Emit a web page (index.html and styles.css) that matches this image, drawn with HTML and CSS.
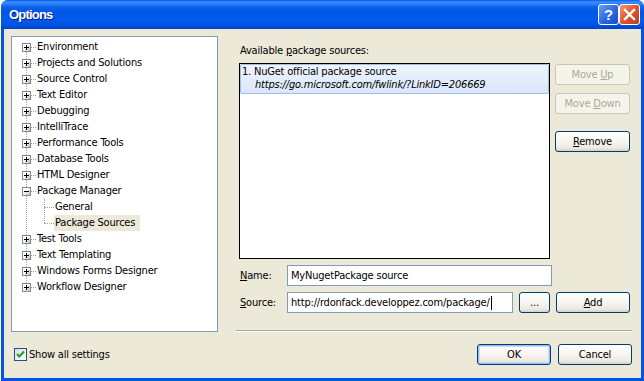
FILE: index.html
```html
<!DOCTYPE html>
<html lang="en">
<head>
  <meta charset="UTF-8">
  <title>Options</title>
  <link rel="stylesheet" href="styles.css">
</head>
<body>
<div class="window">
  <!-- title bar -->
  <div class="titlebar">
    <span class="title">Options</span>
    <div class="capButtons">
      <span class="capBtn help">?</span>
      <span class="capBtn close">
        <svg width="13" height="13" viewBox="0 0 13 13">
          <path d="M2 2 L11 11 M11 2 L2 11" stroke="#fff" stroke-width="2.4" stroke-linecap="square"/>
        </svg>
      </span>
    </div>
  </div>

  <div class="client">
    <div class="main">
      <!-- options tree -->
      <div class="tree">
        <ul class="nodes">
          <li class="node"><span class="exp plus"></span><span class="stub"></span><span class="label">Environment</span></li>
          <li class="node"><span class="exp plus"></span><span class="stub"></span><span class="label">Projects and Solutions</span></li>
          <li class="node"><span class="exp plus"></span><span class="stub"></span><span class="label">Source Control</span></li>
          <li class="node"><span class="exp plus"></span><span class="stub"></span><span class="label">Text Editor</span></li>
          <li class="node"><span class="exp plus"></span><span class="stub"></span><span class="label">Debugging</span></li>
          <li class="node"><span class="exp plus"></span><span class="stub"></span><span class="label">IntelliTrace</span></li>
          <li class="node"><span class="exp plus"></span><span class="stub"></span><span class="label">Performance Tools</span></li>
          <li class="node"><span class="exp plus"></span><span class="stub"></span><span class="label">Database Tools</span></li>
          <li class="node"><span class="exp plus"></span><span class="stub"></span><span class="label">HTML Designer</span></li>
          <li class="node"><span class="exp"></span><span class="stub"></span><span class="label">Package Manager</span></li>
          <li>
            <ul class="children">
              <li class="node child"><span class="stubLong"></span><span class="label">General</span></li>
              <li class="node child"><span class="stubLong"></span><span class="label selected">Package Sources</span></li>
            </ul>
          </li>
          <li class="node"><span class="exp plus"></span><span class="stub"></span><span class="label">Test Tools</span></li>
          <li class="node"><span class="exp plus"></span><span class="stub"></span><span class="label">Text Templating</span></li>
          <li class="node"><span class="exp plus"></span><span class="stub"></span><span class="label">Windows Forms Designer</span></li>
          <li class="node"><span class="exp plus"></span><span class="stub"></span><span class="label">Workflow Designer</span></li>
        </ul>
      </div>

      <!-- package sources page -->
      <div class="pane">
        <div class="caption">Available <u>p</u>ackage sources:</div>
        <div class="sources">
          <div class="listbox">
            <div class="item selectedItem">
              <div>1. NuGet official package source</div>
              <div class="url">https://go.microsoft.com/fwlink/?LinkID=206669</div>
            </div>
          </div>
          <div class="sideButtons">
            <span class="btn disabled"><span>Move <u>U</u>p</span></span>
            <span class="btn disabled down"><span>Move <u>D</u>own</span></span>
            <span class="btn remove"><span><u>R</u>emove</span></span>
          </div>
        </div>
        <div class="field nameRow">
          <span class="fieldLabel"><u>N</u>ame:</span>
          <span class="input nameInput">MyNugetPackage source</span>
        </div>
        <div class="field">
          <span class="fieldLabel"><u>S</u>ource:</span>
          <span class="input sourceInput">http://rdonfack.developpez.com/package/<span class="caret"></span></span>
          <span class="btn dots">...</span>
          <span class="btn add"><span><u>A</u>dd</span></span>
        </div>
        <div class="separator"></div>
      </div>
    </div>

    <div class="footer">
      <span class="checkbox">
        <svg width="11" height="11" viewBox="0 0 11 11">
          <path d="M2 5 L4.3 7.5 L9 2.5" fill="none" stroke="#21a121" stroke-width="2"/>
        </svg>
      </span>
      <span class="checkLabel">Show all settings</span>
      <span class="btn ok">OK</span>
      <span class="btn cancel">Cancel</span>
    </div>
  </div>
</div>
</body>
</html>
```

FILE: styles.css
```css
* {
  box-sizing: border-box;
  font-family: "DejaVu Sans", "Liberation Sans", sans-serif;
  font-stretch: condensed;
  font-size: 11px;
  letter-spacing: -0.2px;
  color: #000;
}
html, body {
  margin: 0;
  padding: 0;
  background: #fff;
}
.window {
  width: 643px;
  height: 381px;
  margin-left: 1px;
  padding: 0 3px 3px 3px;
  background: #0553e1;
  border-radius: 7px 7px 0 0;
  display: flex;
  flex-direction: column;
}
.titlebar {
  height: 29px;
  margin: 0 -3px;
  padding: 0 4px 0 8px;
  border-radius: 7px 7px 0 0;
  background: linear-gradient(to bottom, #0a5ae6 0, #3d8dfb 2px, #2b7ff5 4px, #0c62ea 7px, #0056e6 12px, #005aec 20px, #0052e2 25px, #0043cc 29px);
  display: flex;
  align-items: center;
}
.title {
  flex: 1;
  color: #fff;
  font-family: "Liberation Sans", sans-serif;
  font-stretch: normal;
  font-weight: bold;
  font-size: 13px;
  letter-spacing: -0.8px;
  text-shadow: 1px 1px 0 #0a1c8c;
  padding-bottom: 1px;
}
.capButtons {
  display: flex;
  gap: 0;
}
.capBtn {
  width: 21px;
  height: 21px;
  border: 1px solid #fff;
  border-radius: 3px;
  display: flex;
  align-items: center;
  justify-content: center;
}
.help {
  background: linear-gradient(135deg, #6a9cf8, #2663e0 60%, #1a4fd0);
  color: #fff;
  font-weight: bold;
  font-size: 15px;
  font-family: "Liberation Sans", sans-serif;
  letter-spacing: 0;
}
.close {
  background: linear-gradient(135deg, #f09a7c, #e0532e 50%, #c43c18);
}

/* client area */
.client {
  flex: 1;
  background: #ece9d8;
  padding: 7px 9px 13px 7px;
  display: flex;
  flex-direction: column;
}
.main {
  display: flex;
  height: 296px;
}
.tree {
  width: 207px;
  height: 296px;
  background: #fff;
  border: 1px solid #7f9db9;
  padding: 2px 0 0 0;
}
ul {
  list-style: none;
  margin: 0;
  padding: 0;
}
.nodes {
  position: relative;
}
.nodes::before {
  content: "";
  position: absolute;
  left: 14px;
  top: 8px;
  bottom: 8px;
  border-left: 1px dotted #a0a0a0;
}
.node {
  height: 16px;
  display: flex;
  align-items: flex-start;
  padding-left: 10px;
  position: relative;
}
.exp {
  width: 9px;
  height: 9px;
  margin-top: 4px;
  border: 1px solid #7a8a99;
  background: linear-gradient(135deg, #fff 30%, #c9c5b8);
  position: relative;
  z-index: 1;
}
.exp::before {
  content: "";
  position: absolute;
  left: 1px;
  top: 3px;
  width: 5px;
  height: 1px;
  background: #000;
}
.exp.plus::after {
  content: "";
  position: absolute;
  left: 3px;
  top: 1px;
  width: 1px;
  height: 5px;
  background: #000;
}
.stub {
  width: 5px;
  margin-top: 8px;
  border-top: 1px dotted #a0a0a0;
}
.label {
  line-height: 16px;
  padding: 0 2px 0 1px;
  white-space: nowrap;
}
.children {
  position: relative;
}
.children::before {
  content: "";
  position: absolute;
  left: 32px;
  top: 0;
  bottom: 8px;
  border-left: 1px dotted #a0a0a0;
}
.child {
  padding-left: 32px;
}
.stubLong {
  width: 10px;
  margin-top: 8px;
  border-top: 1px dotted #a0a0a0;
}
.selected {
  background: #ece9d8;
  padding: 0 5px 0 1px;
}

/* right pane */
.pane {
  width: 396px;
  margin-left: 18px;
  display: flex;
  flex-direction: column;
}
.caption {
  margin: 8px 0 0 4px;
  line-height: 13px;
}
.sources {
  display: flex;
  margin: 6px 0 0 3px;
}
.listbox {
  width: 311px;
  height: 196px;
  border: 1px solid #000;
  background: #fff;
}
.item {
  padding: 1px 2px 3px 2px;
  line-height: 13px;
}
.selectedItem {
  background: linear-gradient(to bottom, #eef4fd, #d9e6fa);
  border: 1px solid #9fbde6;
  border-radius: 2px;
  padding: 0 2px 2px 1px;
}
.url {
  font-style: italic;
  padding-left: 13px;
}
.sideButtons {
  display: flex;
  flex-direction: column;
  margin: 1px 0 0 5px;
}
.btn {
  display: flex;
  align-items: center;
  justify-content: center;
  width: 75px;
  height: 21px;
  border: 1px solid #003c74;
  border-radius: 3px;
  background: linear-gradient(to bottom, #fff 0, #f6f5ef 50%, #ece9e0 85%, #d6d0c5 100%);
  white-space: nowrap;
}
.btn.disabled {
  border-color: #c9c7ba;
  background: #f5f4ea;
  color: #aca899;
}
.btn.disabled span,
.btn.disabled u {
  color: #aca899;
}
.btn.down {
  margin-top: 8px;
}
.btn.remove {
  margin-top: 17px;
}
.field {
  display: flex;
  align-items: center;
  margin: 6px 0 0 4px;
  height: 21px;
}
.nameRow {
  margin-top: 6px;
}
.fieldLabel {
  width: 47px;
}
.input {
  height: 21px;
  border: 1px solid #7f9db9;
  background: #fff;
  padding: 0 3px;
  display: flex;
  align-items: center;
  white-space: nowrap;
}
.nameInput {
  width: 265px;
}
.sourceInput {
  width: 226px;
}
.caret {
  width: 1px;
  height: 14px;
  background: #000;
  margin-left: 1px;
}
.btn.dots {
  width: 31px;
  margin-left: 6px;
}
.btn.add {
  width: 74px;
  margin-left: 6px;
}
.separator {
  margin-top: auto;
  margin-bottom: 0;
  height: 2px;
  border-top: 1px solid #aca899;
  border-bottom: 1px solid #fff;
}

/* footer */
.footer {
  display: flex;
  align-items: center;
  height: 21px;
  margin-top: 12px;
}
.checkbox {
  width: 13px;
  height: 13px;
  margin-left: 3px;
  border: 1px solid #1c5180;
  background: linear-gradient(135deg, #dcdcd7, #fff);
  display: flex;
  align-items: center;
  justify-content: center;
}
.checkLabel {
  flex: 1;
  margin-left: 2px;
}
.btn.ok {
  width: 74px;
  box-shadow: inset 0 0 0 1px #9dbcf0, inset 0 0 0 2px #c9daf7;
}
.btn.cancel {
  width: 74px;
  margin-left: 7px;
}
```
